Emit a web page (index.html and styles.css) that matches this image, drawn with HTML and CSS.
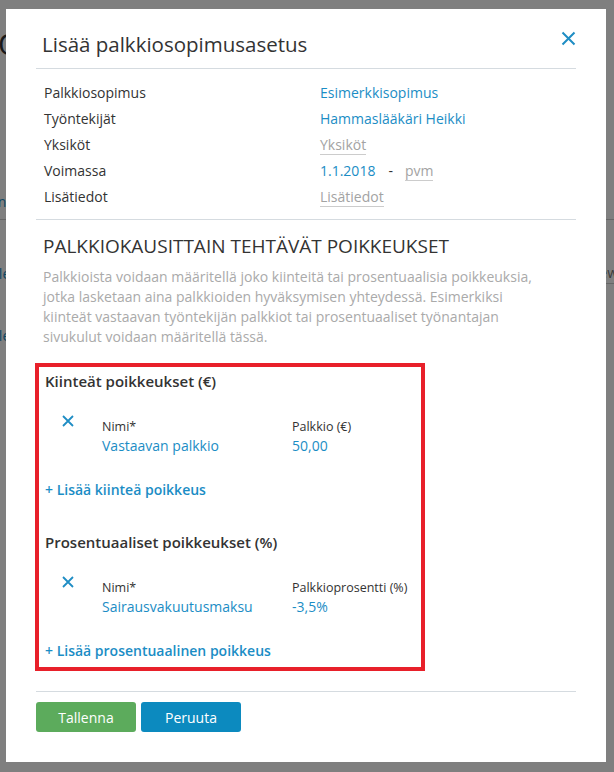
FILE: index.html
```html
<!DOCTYPE html>
<html lang="fi">
<head>
  <meta charset="UTF-8">
  <title>Palkkiosopimukset</title>
  <link rel="stylesheet" href="styles.css">
</head>
<body>

  <main class="page">
    <h1 class="page-title">Ohjelmat</h1>
    <div class="page-table">
      <div class="page-head">Funktio</div>
      <div class="page-row"><span class="page-link">Alennus</span><span class="page-input">View</span></div>
      <div class="page-row"><span class="page-link">Alennus</span></div>
    </div>
  </main>

  <div class="overlay">
    <div class="modal">
      <header class="modal-header">
        <h2>Lisää palkkiosopimusasetus</h2>
        <button class="close" type="button" title="Sulje">
          <svg width="15" height="15" viewBox="0 0 15 15">
            <path d="M1.5 1.5 L13.5 13.5 M13.5 1.5 L1.5 13.5" stroke="#1f8dc4" stroke-width="2" fill="none"/>
          </svg>
        </button>
      </header>

      <dl class="details">
        <dt>Palkkiosopimus</dt>
        <dd><a class="link">Esimerkkisopimus</a></dd>
        <dt>Työntekijät</dt>
        <dd><a class="link">Hammaslääkäri Heikki</a></dd>
        <dt>Yksiköt</dt>
        <dd><span class="placeholder">Yksiköt</span></dd>
        <dt>Voimassa</dt>
        <dd><a class="link">1.1.2018</a><span class="dash">-</span><span class="placeholder">pvm</span></dd>
        <dt>Lisätiedot</dt>
        <dd><span class="placeholder">Lisätiedot</span></dd>
      </dl>

      <section class="exceptions">
        <h3>PALKKIOKAUSITTAIN TEHTÄVÄT POIKKEUKSET</h3>
        <p>Palkkioista voidaan määritellä joko kiinteitä tai prosentuaalisia poikkeuksia, jotka lasketaan aina palkkioiden hyväksymisen yhteydessä. Esimerkiksi kiinteät vastaavan työntekijän palkkiot tai prosentuaaliset työnantajan sivukulut voidaan määritellä tässä.</p>

        <div class="highlight">
          <div class="group">
            <h4>Kiinteät poikkeukset (€)</h4>
            <div class="item">
              <button class="remove" type="button" title="Poista">
                <svg width="12" height="12" viewBox="0 0 12 12">
                  <path d="M1 1 L11 11 M11 1 L1 11" stroke="#1f8dc4" stroke-width="1.8" fill="none"/>
                </svg>
              </button>
              <div class="field">
                <label>Nimi*</label>
                <a class="link value">Vastaavan palkkio</a>
              </div>
              <div class="field">
                <label>Palkkio (€)</label>
                <a class="link value">50,00</a>
              </div>
            </div>
            <a class="link add">+ Lisää kiinteä poikkeus</a>
          </div>

          <div class="group">
            <h4>Prosentuaaliset poikkeukset (%)</h4>
            <div class="item">
              <button class="remove" type="button" title="Poista">
                <svg width="12" height="12" viewBox="0 0 12 12">
                  <path d="M1 1 L11 11 M11 1 L1 11" stroke="#1f8dc4" stroke-width="1.8" fill="none"/>
                </svg>
              </button>
              <div class="field">
                <label>Nimi*</label>
                <a class="link value">Sairausvakuutusmaksu</a>
              </div>
              <div class="field">
                <label>Palkkioprosentti (%)</label>
                <a class="link value">-3,5%</a>
              </div>
            </div>
            <a class="link add">+ Lisää prosentuaalinen poikkeus</a>
          </div>
        </div>
      </section>

      <footer class="modal-footer">
        <button class="btn btn-save" type="button">Tallenna</button>
        <button class="btn btn-cancel" type="button">Peruuta</button>
      </footer>
    </div>
  </div>

</body>
</html>
```

FILE: styles.css
```css
body {
  margin: 0;
  background: #fff;
  color: #333;
  font-family: "Open Sans", "Noto Sans", sans-serif;
  font-size: 14px;
}

/* page behind the dialog */
.page {
  margin-left: -2px;
  padding-top: 22px;
}
.page-title {
  margin: 0;
  font-size: 30px;
  font-weight: 400;
  line-height: 44px;
  color: #333;
}
.page-table {
  margin-top: 126px;
}
.page-head {
  margin-left: -16px;
  padding-bottom: 7px;
  border-bottom: 1px solid #ccc;
  color: #1a8dc6;
  line-height: 20px;
}
.page-row {
  display: flex;
  justify-content: space-between;
  align-items: center;
  height: 62px;
  margin-left: -8px;
  margin-right: -4px;
}
.page-head + .page-row {
  margin-top: 22px;
}
.page-link {
  color: #1a8dc6;
}
.page-input {
  color: #777;
  border-bottom: 1px solid #ccc;
  padding-bottom: 1px;
}

/* dialog */
.overlay {
  position: fixed;
  inset: 0;
  background: rgba(0, 0, 0, 0.5);
  padding: 9px 0 0 6px;
}
.modal {
  width: 600px;
  box-sizing: border-box;
  background: #fff;
  padding: 21px 30px 30px;
}
.modal-header {
  display: flex;
  justify-content: space-between;
  align-items: flex-start;
  padding: 0 0 10px 6px;
  border-bottom: 1px solid #d5dbe0;
}
.modal-header h2 {
  margin: 0;
  font-size: 20.5px;
  font-weight: 400;
  line-height: 28px;
  color: #333;
}
.close, .remove {
  border: none;
  background: none;
  padding: 0;
  cursor: pointer;
  display: flex;
}
.close {
  margin-top: 1px;
}

.link {
  color: #1b8dc5;
  text-decoration: none;
  cursor: pointer;
}

.details {
  display: grid;
  grid-template-columns: 276px 1fr;
  margin: 0;
  padding: 11px 8px 9px;
  border-bottom: 1px solid #d5dbe0;
  line-height: 26px;
}
.details dt, .details dd {
  margin: 0;
}
.placeholder {
  color: #a3a3a3;
  border-bottom: 1px solid #ccc;
}
.dash {
  margin: 0 12px 0 13px;
  color: #333;
}

.exceptions {
  padding-top: 13px;
}
.exceptions h3 {
  margin: 0 0 8px 7px;
  font-size: 19px;
  font-weight: 400;
  line-height: 26px;
  color: #333;
}
.exceptions p {
  margin: 0 0 16px 7px;
  max-width: 510px;
  line-height: 20px;
  color: #aaa;
}

.highlight {
  width: 390px;
  box-sizing: border-box;
  margin-left: -1px;
  border: 4px solid #e8202a;
  padding: 4px 6px 6px;
}
.group + .group {
  margin-top: 32px;
}
.group h4 {
  margin: 0;
  font-size: 15px;
  font-weight: 600;
  line-height: 20px;
  color: #333;
}
.item {
  display: grid;
  grid-template-columns: 57px 190px 1fr;
  margin-top: 24px;
}
.item .remove {
  margin-left: 17px;
  align-self: start;
}
.field label {
  display: block;
  padding-top: 3px;
  font-size: 12.5px;
  line-height: 18px;
  color: #333;
}
.field .value {
  display: block;
  line-height: 20px;
}
.add {
  display: block;
  margin-top: 24px;
  font-weight: 600;
  line-height: 20px;
}

.modal-footer {
  display: flex;
  gap: 5px;
  margin-top: 20px;
  padding-top: 10px;
  border-top: 1px solid #d5dbe0;
}
.btn {
  width: 100px;
  height: 30px;
  border: none;
  border-radius: 3px;
  color: #fff;
  font-family: inherit;
  font-size: 14px;
  cursor: pointer;
}
.btn-save {
  background: #5cab5c;
}
.btn-cancel {
  background: #0c8abf;
}
```
